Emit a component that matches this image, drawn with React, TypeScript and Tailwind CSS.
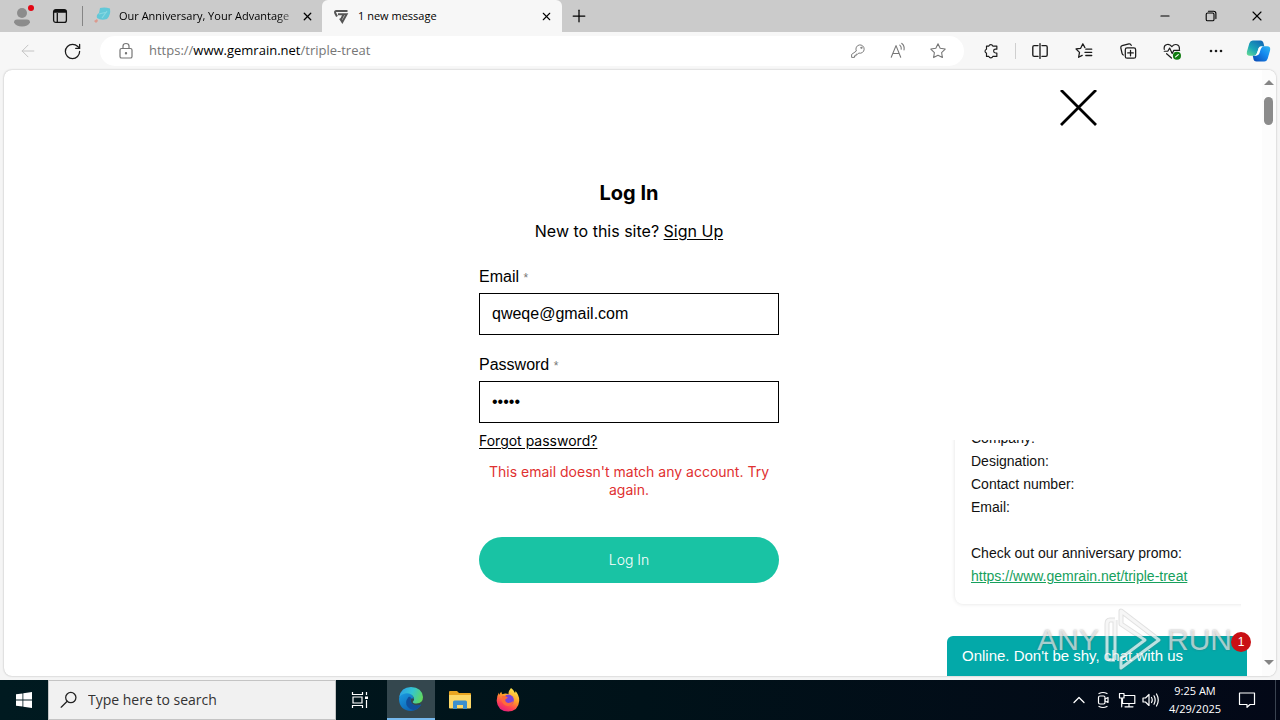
import React from "react";
import { X, Plus, Minus, ArrowLeft, RotateCw } from "lucide-react";

const UI = "font-['Open_Sans','Noto_Sans',sans-serif]";
const ARIAL = "font-['Liberation_Sans',Arial,sans-serif]";
const WIDE = "font-[Inter,'Liberation_Sans',sans-serif]";

function IconButton({ label, className, children }: { label: string; className: string; children: React.ReactNode }) {
  return (
    <button type="button" aria-label={label} className={`flex shrink-0 items-center justify-center ${className}`}>
      {children}
    </button>
  );
}

function Line({ size = 18, width = 1.2, box = 20, children }: { size?: number; width?: number; box?: number; children: React.ReactNode }) {
  return (
    <svg width={size} height={size} viewBox={`0 0 ${box} ${box}`} fill="none" stroke="currentColor" strokeWidth={width} strokeLinecap="round" strokeLinejoin="round" aria-hidden="true">
      {children}
    </svg>
  );
}

const STAR = "M10 2 12.4 7 18 7.8 14 11.7 14.9 17.3 10 14.7 5.1 17.3 6 11.7 2 7.8 7.6 7Z";

function TabBar() {
  return (
    <header className="flex h-8 shrink-0 items-stretch bg-[#cbcbcb] text-[11px] text-black">
      <IconButton label="Profile" className="w-11">
        <svg width="26" height="26" viewBox="0 0 26 26" aria-hidden="true">
          <circle cx="13" cy="10" r="5" fill="#8c8c8c" />
          <path d="M5 19.5Q5 16.5 8 16.5H18Q21 16.5 21 19.5Q19 23.5 13 23.5T5 19.5Z" fill="#8c8c8c" />
          <circle cx="22" cy="5" r="3" fill="#e30613" />
        </svg>
      </IconButton>
      <IconButton label="Workspaces" className="w-8">
        <svg width="16" height="16" viewBox="0 0 16 16" fill="none" stroke="#111" strokeWidth="1.3" aria-hidden="true">
          <rect x="1.6" y="1.6" width="12.8" height="12.8" rx="2.2" />
          <path d="M2 4H14M5.3 5V14" />
          <path d="M2 3H14" strokeWidth="2" />
        </svg>
      </IconButton>
      <div className="my-1.5 ml-1.5 w-px bg-[#858585]" />
      <div className="flex w-[239px] items-center pl-2.5 pr-[7px]">
        <svg className="shrink-0" width="18" height="18" viewBox="0 0 18 18" aria-hidden="true">
          <path d="M7 1Q12 0 17 1.5Q18 8 14 12Q8 14 4 11Q3 8 6 6Z" fill="#62c8d8" />
          <path d="M6 7 14 5M9 11 14 4" stroke="#86d8e2" strokeWidth="1.2" />
          <path d="M1 14 4 12 5 14 3 16Z" fill="#dc9a8e" />
        </svg>
        <span className="ml-2 flex-1 whitespace-nowrap [mask-image:linear-gradient(90deg,#000_88%,transparent)]">Our Anniversary, Your Advantage</span>
        <IconButton label="Close Our Anniversary tab" className="w-4"><X size={13} strokeWidth={2.4} /></IconButton>
      </div>
      <div className="flex w-60 items-center rounded-t-md bg-[#f7f7f7] pl-2.5 pr-2">
        <svg className="shrink-0" width="18" height="18" viewBox="0 0 18 18" fill="none" stroke="#555" strokeWidth="2" aria-hidden="true">
          <path d="M15.5 4H4.5Q2.5 4 3.2 6L5 9.5M6 7.2H14.6L10.3 15L8 11.5M11.5 7.5 9.3 12" />
        </svg>
        <span className="ml-2 flex-1 whitespace-nowrap">1 new message</span>
        <IconButton label="Close 1 new message tab" className="w-4"><X size={13} strokeWidth={2} /></IconButton>
      </div>
      <IconButton label="New tab" className="w-[34px]"><Plus size={20} strokeWidth={1.5} /></IconButton>
      <div className="flex-1" />
      <IconButton label="Minimize" className="w-[46px]"><Minus size={14} strokeWidth={1.8} /></IconButton>
      <IconButton label="Restore" className="w-[46px]">
        <Line size={12} box={12} width={1.1}>
          <rect x="1.2" y="3" width="7.8" height="7.8" rx="1.4" />
          <path d="M3.4 1.2H8.6Q10.9 1.2 10.9 3.5V8.6" />
        </Line>
      </IconButton>
      <IconButton label="Close window" className="w-[46px]"><X size={16} strokeWidth={1.7} /></IconButton>
    </header>
  );
}

function Toolbar() {
  return (
    <nav aria-label="Browser toolbar" className="flex h-[38px] shrink-0 items-center bg-[#f7f7f7] pl-1.5 pr-0.5 text-[#1b1b1b]">
      <IconButton label="Back" className="w-11 text-[#c4c4c4]"><ArrowLeft size={20} strokeWidth={1.2} /></IconButton>
      <IconButton label="Refresh" className="w-11"><RotateCw size={19} strokeWidth={1.6} /></IconButton>
      <div className="ml-1.5 mr-[5px] flex h-[30px] min-w-0 flex-1 items-center rounded-full bg-white pl-4 pr-1.5 text-[#767676]">
        <Line size={20}>
          <rect x="4" y="7.5" width="12" height="9.5" rx="1.6" />
          <path d="M7 7.3V5Q7 2.5 10 2.5T13 5V7.3" />
          <circle cx="10" cy="12.2" r="0.6" fill="currentColor" />
        </Line>
        <a href="https://www.gemrain.net/triple-treat" className="ml-[13px] flex-1 whitespace-nowrap text-[13px]">
          https://<span className="text-black">www.gemrain.net</span>/triple-treat
        </a>
        <IconButton label="Saved passwords" className="w-10">
          <Line size={16}>
            <path d="M7.7 9.6A5.2 5.2 0 1 1 11.1 12.6L9.4 14H7.6V16H5.6V18H2V14.8Z" />
            <circle cx="14.1" cy="6" r="0.8" />
          </Line>
        </IconButton>
        <IconButton label="Read aloud" className="w-10">
          <Line><path d="M2.5 17 7.8 4 13 17M4.4 12.7H11.2M12 3.5Q14 5 13.6 8M14.2 1.6Q17.5 4 16.7 8.8" /></Line>
        </IconButton>
        <IconButton label="Add to favorites" className="w-10"><Line><path d={STAR} /></Line></IconButton>
      </div>
      <IconButton label="Extensions" className="w-11">
        <Line width={1.3}><path d="M5 4.5H7.6A2.3 2.3 0 0 1 12 4.5H16.5V8H15A2.1 2.1 0 0 0 15 12.2H16.5V16H12A2.3 2.3 0 0 1 7.6 16H5V12.4A2.3 2.3 0 0 1 5 8Z" /></Line>
      </IconButton>
      <div className="mx-0.5 h-4 w-px bg-[#cfcfcf]" />
      <IconButton label="Split screen" className="w-11">
        <Line width={1.5}><path d="M7.8 4H3.5Q2 4 2 5.5V14.5Q2 16 3.5 16H7.8M12.2 4H16.5Q18 4 18 5.5V14.5Q18 16 16.5 16H12.2M10 1.8V18.2" /></Line>
      </IconButton>
      <IconButton label="Favorites" className="w-11">
        <Line width={1.4}><path d="M11 6.2 8.7 2 6.3 7 1.2 7.7 5 11.5 4 17 8 14.9M12 8H18.6M11 11.5H18.6M12 15H18.6" /></Line>
      </IconButton>
      <IconButton label="Collections" className="w-11">
        <Line width={1.4}><rect x="7" y="6.5" width="11.5" height="11.5" rx="2" /><path d="M12.8 9.2V15.3M9.7 12.2H15.9M4.8 14.5Q3.7 14 3.4 12.7L2 6.5Q1.8 4.5 3.5 4L11 2Q13 1.7 13.6 3.7" /></Line>
      </IconButton>
      <IconButton label="Browser essentials" className="w-11">
        <Line width={1.3}>
          <path d="M1.4 8.2Q.6 3.6 4.5 2.8Q7.8 2.2 9.8 5.2Q12.4 2 15.6 3Q18.7 4 18.2 8.2M1.4 10.3H5.3L7.4 6.8 10.2 12.8 12 9.3H18.5M4 13 9.4 17.8" />
          <circle cx="15.5" cy="15.3" r="4.5" fill="#107c10" stroke="none" />
          <path d="M14 16.5 17 14" stroke="#fff" />
        </Line>
      </IconButton>
      <IconButton label="Settings and more" className="w-11">
        <svg width="16" height="4" viewBox="0 0 16 4" fill="currentColor" aria-hidden="true"><circle cx="3" cy="2" r="1.3" /><circle cx="8" cy="2" r="1.3" /><circle cx="13" cy="2" r="1.3" /></svg>
      </IconButton>
      <IconButton label="Copilot" className="w-10">
        <svg width="25" height="24" viewBox="0 0 26 24" aria-hidden="true">
          <defs>
            <linearGradient id="cpA" x1="0" y1="1" x2="0.8" y2="0"><stop offset="0" stopColor="#6be08f" /><stop offset="0.45" stopColor="#1aa5b8" /><stop offset="1" stopColor="#1268b5" /></linearGradient>
            <linearGradient id="cpB" x1="0" y1="1" x2="1" y2="0"><stop offset="0" stopColor="#0a45b0" /><stop offset="0.6" stopColor="#148cf0" /><stop offset="1" stopColor="#33b8ee" /></linearGradient>
          </defs>
          <path d="M7 1H15Q18 1 18.5 5L19 7H16Q13.8 7 13 9.5L11.5 14Q10.5 17 8 17H4Q0 17 1 12.5L3.5 4Q4.5 1 7 1Z" fill="url(#cpA)" />
          <path d="M19 23H11Q8 23 7.5 19L7 17H9.5Q11.8 17 12.6 14.5L14 10Q15 7 18 7H22Q26 7 25 11.5L22.5 20Q21.5 23 19 23Z" fill="url(#cpB)" />
          <path d="M13.2 8.8Q14 7.2 16 7.2H17.4Q16 8 15.2 10.4L14 14.4Q13 16.8 10.8 16.8H9Q10.8 16.4 11.6 13.8Z" fill="#fff" />
        </svg>
      </IconButton>
    </nav>
  );
}

function LoginForm() {
  return (
    <form className={`mx-auto flex w-[300px] flex-col pt-[109px] text-base text-black ${ARIAL}`} onSubmit={(e) => e.preventDefault()}>
      <h1 className={`text-center text-xl font-bold leading-7 ${WIDE}`}>Log In</h1>
      <p className={`mt-3 text-center leading-6 ${WIDE}`}>
        New to this site? <a href="#signup" className="underline underline-offset-2">Sign Up</a>
      </p>
      <label htmlFor="email" className="mt-[22px] leading-6">Email <span className="text-xs text-[#777]">*</span></label>
      <input id="email" type="email" defaultValue="qweqe@gmail.com" className="mt-1 h-[42px] border border-black bg-white px-3 outline-none" />
      <label htmlFor="password" className="mt-[18px] leading-6">Password <span className="text-xs text-[#777]">*</span></label>
      <input id="password" type="password" defaultValue="qwert" className="mt-1 h-[42px] border border-black bg-white px-3 outline-none" />
      <a href="#forgot" className={`mt-2 self-start text-sm leading-5 underline underline-offset-2 ${WIDE}`}>Forgot password?</a>
      <p role="alert" className={`mt-3 text-center text-sm leading-[18px] text-[#df3131] ${WIDE}`}>This email doesn't match any account. Try again.</p>
      <button type="submit" className={`mt-[38px] h-[46px] rounded-full bg-[#19c3a4] text-sm font-light text-white ${WIDE}`}>Log In</button>
    </form>
  );
}

function ChatWidget() {
  return (
    <aside aria-label="Chat" className={`absolute bottom-0 right-[29px] w-[300px] ${ARIAL}`}>
      <div className="flex h-[196px] w-[294px] flex-col justify-end overflow-hidden pb-8 pl-2">
        <div className="-mr-2 rounded-lg bg-white pb-4 pl-4 pt-2 text-sm leading-[23px] text-[#111] shadow-[0_0_4px_rgba(0,0,0,0.12)]">
          <p>Company:</p>
          <p>Designation:</p>
          <p>Contact number:</p>
          <p>Email:</p>
          <p className="mt-[23px]">Check out our anniversary promo:</p>
          <a href="https://www.gemrain.net/triple-treat" className="text-[#16a05c] underline">https://www.gemrain.net/triple-treat</a>
        </div>
      </div>
      <button type="button" className="flex h-10 w-full items-center rounded-t-md bg-[#03a9a9] pl-[15px] text-[15px] text-white">
        Online. Don't be shy, chat with us
      </button>
      <span className="absolute -right-1 bottom-6 flex size-5 items-center justify-center rounded-full bg-[#c90f14] text-xs text-white">1</span>
    </aside>
  );
}

function Watermark() {
  return (
    <div className={`pointer-events-none absolute bottom-1 right-11 flex h-16 items-center gap-1 text-[30px] leading-none text-white/60 [text-shadow:0_0_2px_rgba(90,90,90,0.55)] ${ARIAL}`}>
      <span>ANY</span>
      <svg width="60" height="64" viewBox="0 0 60 64" fill="none" aria-hidden="true">
        <g stroke="#777" strokeOpacity="0.22" strokeWidth="5" strokeLinejoin="round"><path d="M12 12H7Q4 12 4 16V48Q4 52 7 52H12M12 12V52M18 3 56 32 18 60V50L42 32 18 16Z" /></g>
        <g stroke="#fff" strokeOpacity="0.7" strokeWidth="3" strokeLinejoin="round"><path d="M12 12H7Q4 12 4 16V48Q4 52 7 52H12M12 12V52M18 3 56 32 18 60V50L42 32 18 16Z" /></g>
      </svg>
      <span>RUN</span>
    </div>
  );
}

function Taskbar() {
  return (
    <footer className="flex h-10 shrink-0 items-stretch bg-linear-to-r from-[#001a20] via-[#001219] to-[#030817] text-white">
      <IconButton label="Start" className="w-12">
        <svg width="16" height="16" viewBox="0 0 16 16" fill="#fff" aria-hidden="true"><path d="M0 2.3 6.5 1.4V7.5H0ZM7.3 1.3 16 0V7.5H7.3ZM0 8.4H6.5V14.6L0 13.7ZM7.3 8.4H16V16L7.3 14.7Z" /></svg>
      </IconButton>
      <label className="flex w-72 items-center border border-[#c4c4c4] bg-[#f1f1f1] pl-[11px] text-[#222]">
        <Line size={18} width={1.4}><circle cx="12" cy="7.3" r="5.7" /><path d="M8 11.4 1.3 18" /></Line>
        <input type="search" aria-label="Search" placeholder="Type here to search" className="ml-2.5 min-w-0 flex-1 bg-transparent text-sm outline-none placeholder:text-[#333]" />
      </label>
      <IconButton label="Task view" className="w-[51px] pr-1">
        <svg width="18" height="18" viewBox="0 0 18 18" fill="none" stroke="#fff" strokeWidth="1.2" aria-hidden="true">
          <path d="M1.5 1V3.5H11.5V1M1.5 17V14.5H11.5V17M2 6H11V12H2ZM15.5 1V4M15.5 9V17" />
          <path d="M14 5.5H17V8H14Z" fill="#fff" stroke="none" />
        </svg>
      </IconButton>
      <IconButton label="Microsoft Edge" className="w-12 border-b-2 border-[#76b9ed] bg-[#34474e]">
        <svg width="26" height="26" viewBox="0 0 26 26" aria-hidden="true">
          <defs>
            <linearGradient id="edgeTop" x1="0" y1="0.3" x2="1" y2="0.6"><stop offset="0" stopColor="#2b9fe6" /><stop offset="0.5" stopColor="#34c5d0" /><stop offset="1" stopColor="#62d85a" /></linearGradient>
            <linearGradient id="edgeLow" x1="0" y1="0" x2="0.8" y2="1"><stop offset="0" stopColor="#1b9de2" /><stop offset="1" stopColor="#0b5aad" /></linearGradient>
          </defs>
          <path d="M1 13Q1 6 8 6.5Q15 7 15.8 13Q13 11 12.5 14Q12.5 18 17 19.5Q20 20.3 23.3 18.6Q19.5 25 13 25Q1.5 24.5 1 13Z" fill="url(#edgeLow)" />
          <path d="M1.2 11Q3 1 13 1Q24 1.5 25 11Q25 17 18.5 17.6Q14.5 17.6 14.8 15.8Q17 13.5 15.5 11Q12.5 6.5 7 7.5Q3 8.3 1.2 11Z" fill="url(#edgeTop)" />
          <path d="M10.5 11Q6 16.5 9.8 21Q13 25 18 23.6Q21.5 22 23.3 18.6Q18 20.8 14.6 18Q11.8 15.5 13 12Q12 10 10.5 11Z" fill="#114f9c" />
        </svg>
      </IconButton>
      <IconButton label="File Explorer" className="w-[49px]">
        <svg width="22" height="20" viewBox="0 0 22 20" aria-hidden="true">
          <path d="M0 2Q0 1 1 1H8L10 3H21Q22 3 22 4V18H0Z" fill="#e9a521" />
          <path d="M0 5H22V17.5Q22 18.5 21 18.5H1Q0 18.5 0 17.5Z" fill="#fcd767" />
          <path d="M4 19V12Q4 10.5 5.5 10.5H16.5Q18 10.5 18 12V19H14V15H8V19Z" fill="#3b8fcd" />
        </svg>
      </IconButton>
      <IconButton label="Firefox" className="w-12">
        <svg width="24" height="24" viewBox="0 0 24 24" aria-hidden="true">
          <defs><linearGradient id="fox" x1="0.8" y1="0" x2="0.3" y2="1"><stop offset="0" stopColor="#fff14f" /><stop offset="0.45" stopColor="#ff9a29" /><stop offset="0.75" stopColor="#ff4252" /><stop offset="1" stopColor="#e21c80" /></linearGradient></defs>
          <path d="M15 0Q18 2 19 5Q19.5 4 19.5 3Q23.5 7.5 23.2 13Q22.5 23 12 23.6Q1.5 23 .7 13Q.6 8 3 4.5V7Q4 5 5.3 3.8Q5.5 5.5 6.5 6.3Q9 4.8 12.5 6Q12.5 2.5 15 0Z" fill="url(#fox)" />
          <circle cx="12.5" cy="12" r="5.4" fill="#7b43d8" />
          <path d="M6 8Q9 7 12 9.8L9.5 11.3Q8.5 14 12 15Q15 15 17.5 13Q16 18 12 18Q6.5 17.5 5.5 12Z" fill="#ff6a3a" />
        </svg>
      </IconButton>
      <div className="flex-1" />
      <IconButton label="Show hidden icons" className="w-6"><Line size={12} box={12} width={1.3}><path d="M1 8.5 6 3.5 11 8.5" /></Line></IconButton>
      <IconButton label="Meet now" className="w-6">
        <Line size={18} box={18}><rect x="4.5" y="5" width="6.5" height="8" rx="1.5" /><path d="M11 8 14 6.5V11.5L11 10M5 2.5Q9 .5 13 2.5M5 15.5Q9 17.5 13 15.5" /></Line>
      </IconButton>
      <IconButton label="Network" className="w-6">
        <Line size={18} box={18}><path d="M6.5 4.5H16.8V12.5H4.5V8M11 12.5V15.5M7 15.8H15M1.5 2.5H6V7H1.5ZM3.7 7V15.8" /></Line>
      </IconButton>
      <IconButton label="Volume" className="w-6">
        <Line size={18} box={18}><path d="M1 7H3.5L7 3.5V14.5L3.5 11H1ZM9.5 6.5Q11 9 9.5 11.5M12 4.8Q14.3 9 12 13.2M14.5 3Q18 9 14.5 15" /></Line>
      </IconButton>
      <div className="flex w-16 flex-col items-center justify-center text-[11px] leading-[18px]">
        <time>9:25 AM</time>
        <time>4/29/2025</time>
      </div>
      <IconButton label="Notifications" className="w-10">
        <Line size={18} box={18}><path d="M1.5 2H16.5V13.5H12L9 16.3V13.5H1.5Z" /></Line>
      </IconButton>
      <div className="ml-2 mr-1 w-px bg-[#3a4350]" />
    </footer>
  );
}

export default function App() {
  return (
    <div className={`flex h-screen flex-col overflow-hidden bg-[#f5f5f5] ${UI}`}>
      <TabBar />
      <Toolbar />
      <div className="flex min-h-0 flex-1 px-1 pb-1">
        <main className="relative flex min-w-0 flex-1 overflow-hidden rounded-lg bg-white shadow-[0_0_2px_rgba(0,0,0,0.3)]">
          <div className="min-w-0 flex-1 pr-2">
            <LoginForm />
          </div>
          <div aria-hidden="true" className="flex w-[14px] shrink-0 flex-col items-center bg-[#fcfcfc] pb-2.5 pr-px pt-2.5">
            <svg width="10" height="6" viewBox="0 0 10 6" fill="#858585"><path d="M5 0 10 5H0Z" /></svg>
            <div className="mt-[11px] h-7 w-[9px] rounded-full bg-[#8b8b8b]" />
            <div className="flex-1" />
            <svg width="10" height="6" viewBox="0 0 10 6" fill="#858585"><path d="M0 0H10L5 5Z" /></svg>
          </div>
          <button type="button" aria-label="Close" className="absolute right-[179px] top-5">
            <svg width="37" height="36" viewBox="0 0 37 36" stroke="#000" strokeWidth="2.8" aria-hidden="true"><path d="M1 0 36 35M36 0 1 35" /></svg>
          </button>
          <ChatWidget />
          <Watermark />
        </main>
      </div>
      <Taskbar />
    </div>
  );
}
